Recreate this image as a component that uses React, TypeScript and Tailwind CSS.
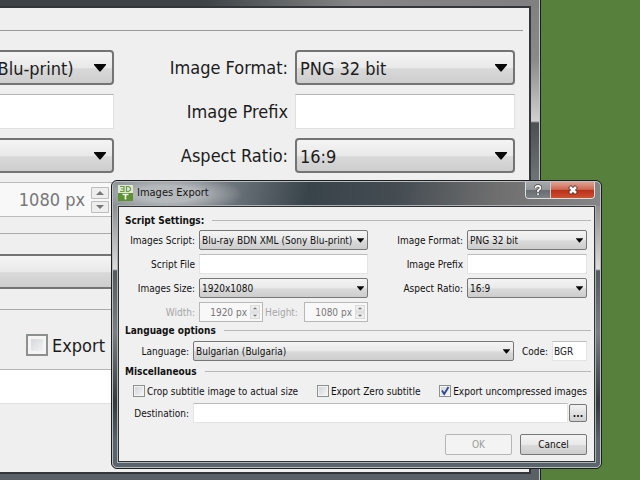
import type { ReactNode } from 'react';

function Arrow({ big }: { big?: boolean }) {
  return (
    <svg
      viewBox="0 0 12 8"
      aria-hidden="true"
      className={
        big
          ? 'pointer-events-none absolute right-2 top-[14px] h-[8px] w-[12px]'
          : 'pointer-events-none absolute right-1 top-2 h-[5px] w-[7px]'
      }
    >
      <path d="M0 0H12V1L6.500 7.500H5.500L0 1Z" fill="#080808" />
    </svg>
  );
}

function Combo({ id, value, big, label }: { id?: string; value: string; big?: boolean; label?: string }) {
  return (
    <div className="relative min-w-0 flex-1">
      <select
        id={id}
        aria-label={label}
        className={
          big
            ? 'block h-[35px] w-full appearance-none rounded-[4px] border-2 border-[#747474] bg-[linear-gradient(#f4f4f4,#e9e9e9_50%,#d9d9d9_54%,#cdcdcd)] pl-[3px] pt-[2px] text-[18px] text-[#1c1c1c]'
            : 'block h-5 w-full appearance-none rounded-[2px] border border-[#777] bg-[linear-gradient(#f4f4f4,#e9e9e9_50%,#dadada_54%,#cdcdcd)] pl-[2px] text-[10px] text-[#111]'
        }
      >
        <option>{value}</option>
      </select>
      <Arrow big={big} />
    </div>
  );
}

function Field({ id, big, label, value }: { id?: string; big?: boolean; label?: string; value?: string }) {
  return (
    <input
      id={id}
      aria-label={label}
      defaultValue={value}
      className={
        big
          ? 'block h-[35px] w-full min-w-0 border border-[#e0e0e0] border-t-[#b5b5b5] bg-white px-1 text-[18px]'
          : 'block h-5 w-full min-w-0 border border-[#e4e4e4] border-t-[#bcbcbc] bg-white px-px text-[10px] text-[#222]'
      }
    />
  );
}

function Spin({ id, value, big, label }: { id?: string; value: string; big?: boolean; label?: string }) {
  return (
    <div
      className={
        big
          ? 'flex h-[35px] items-center gap-[6px] border border-[#bbb] bg-[#f8f8f8] pr-1'
          : 'flex h-5 w-16 items-center gap-[3px] border border-[#b8b8b8] bg-[#f8f8f8] pr-[2px]'
      }
    >
      <input
        id={id}
        aria-label={label}
        disabled
        defaultValue={value}
        className={
          big
            ? 'w-0 min-w-0 flex-1 text-right text-[18px] text-[#777]'
            : 'w-0 min-w-0 flex-1 text-right text-[10px] text-[#777]'
        }
      />
      <svg
        viewBox="0 0 18 26"
        preserveAspectRatio="none"
        aria-hidden="true"
        className={big ? 'h-[26px] w-[18px]' : 'h-[14px] w-[10px]'}
      >
        <path d="M.5 .5H17.5V11.5H.5ZM.5 14.5H17.5V25.5H.5Z" fill="#eee" stroke="#bdbdbd" />
        <path d="M5 8L9 4L13 8ZM5 18L9 22L13 18Z" fill="#777" />
      </svg>
    </div>
  );
}

function Label({ htmlFor, children, muted, big }: { htmlFor: string; children: ReactNode; muted?: boolean; big?: boolean }) {
  return (
    <label
      htmlFor={htmlFor}
      className={
        muted
          ? 'whitespace-nowrap pr-1 text-right text-[#a5a5a5]'
          : big
            ? 'whitespace-nowrap pr-[7px] text-right'
            : 'whitespace-nowrap pr-1 text-right'
      }
    >
      {children}
    </label>
  );
}

function Section({ children }: { children: ReactNode }) {
  return (
    <div className="-mr-1 flex h-4 items-center gap-2">
      <h2 className="text-[10px] font-bold">{children}</h2>
      <div className="h-px flex-1 bg-[#b8b8b8]" />
    </div>
  );
}

function Check({ label, checked }: { label: string; checked?: boolean }) {
  return (
    <label className="flex items-center gap-[2px] whitespace-nowrap">
      <span className="relative block size-3">
        <input
          type="checkbox"
          defaultChecked={checked}
          className="peer block size-3 appearance-none border border-[#8e8f8f] bg-linear-to-br from-[#cfd2d6] to-[#f8f8f8] shadow-[inset_0_0_0_1px_#f4f4f4]"
        />
        <svg
          viewBox="0 0 12 12"
          aria-hidden="true"
          className="pointer-events-none absolute inset-0 hidden size-3 peer-checked:block"
        >
          <path d="M3 5.5L5.2 9L9.5 2" fill="none" stroke="#2c4a94" strokeWidth="1.8" />
        </svg>
      </span>
      {label}
    </label>
  );
}

function BackWindow() {
  return (
    <section
      aria-label="Export settings"
      className="absolute inset-y-0 -left-[202px] right-[99px] border-r border-[#1c1e1f] text-[18px] text-[#1c1c1c]"
    >
      <div className="flex h-full flex-col border-r border-[#c2c6c8] bg-[linear-gradient(90deg,#3d4347_0,#3d4347_55%,#858585_75%,#808080_100%),linear-gradient(#808080_0,#8a8a8a_60px,#d0d0d0_121px,#4c5053_123px,#6f7477_180px,#596068_100%)] bg-[length:100%_6px,100%_100%] bg-no-repeat pb-[6px] pr-[8px] pt-[6px]">
        <div className="flex-1 border-y-2 border-r-2 border-[#33373a] bg-[#efefef] pr-[6px]">
          <div className="mt-[22px] h-px bg-[#9a9a9a]" />
          <div className="mr-2 mt-[19px] grid grid-cols-[316px_1fr_220px] items-center gap-y-[9px]">
            <Combo big label="Images script" value="Blu-ray BDN XML (Sony Blu-print)" />
            <Label big htmlFor="b-format">Image Format:</Label>
            <Combo big id="b-format" value="PNG 32 bit" />
            <Field big label="Script file" />
            <Label big htmlFor="b-prefix">Image Prefix</Label>
            <Field big id="b-prefix" />
            <Combo big label="Images size" value="1920x1080" />
            <Label big htmlFor="b-ratio">Aspect Ratio:</Label>
            <Combo big id="b-ratio" value="16:9" />
            <Spin big label="Height" value="1080 px" />
          </div>
          <div className="mt-4 h-px bg-[#aaa]" />
          <div className="mt-5 flex">
            <Combo big label="Language" value="Bulgarian (Bulgaria)" />
          </div>
          <div className="mt-5 h-px bg-[#aaa]" />
          <label className="ml-[228px] mt-6 flex h-[22px] items-center gap-1">
            <input
              type="checkbox"
              className="size-[22px] appearance-none border-2 border-[#8e8f8f] bg-linear-to-br from-[#cfd2d6] to-[#f8f8f8] shadow-[inset_0_0_0_3px_#f4f4f4]"
            />
            Export
          </label>
          <div className="mt-[13px]">
            <Field big label="Destination" />
          </div>
        </div>
      </div>
    </section>
  );
}

function TitleBar() {
  return (
    <header className="flex h-6 items-start justify-between">
      <div className="flex items-center gap-1 pt-[3px]">
        <svg viewBox="0 0 15 16" className="h-4 w-[15px]" aria-hidden="true">
          <rect width="15" height="8" fill="#dfe8d5" />
          <rect y="8" width="15" height="8" fill="#5d9132" />
          <path d="M2 1.5H6V6.5H2M3 4H6M8.500 1.500V6.500H10.500L12.500 5V3L10.500 1.500Z" fill="none" stroke="#6c9a48" strokeWidth="1.200" />
          <path d="M4.500 9.500H10.500M7.500 9.500V14.500" stroke="#eef5e6" strokeWidth="1.700" />
        </svg>
        <h1 className="text-[11px] leading-4 text-[#151515]">Images Export</h1>
      </div>
      <div className="flex h-[17px] overflow-hidden rounded-b-[4px] border border-t-0 border-[#ddd]">
        <button
          type="button"
          aria-label="Help"
          className="flex w-[25px] items-center justify-center border-r border-[#ccc] bg-[linear-gradient(#a5a8aa,#94989b_48%,#686d71_52%,#7c8185)]"
        >
          <svg viewBox="0 0 10 12" className="h-3 w-[10px]" aria-hidden="true">
            <path d="M2.500 4Q2.500 1.800 5 1.800T7.500 4Q7.500 5.200 5 6.500V8M5 9.200V11" fill="none" stroke="#444" strokeWidth="3" />
            <path d="M2.500 4Q2.500 1.800 5 1.800T7.500 4Q7.500 5.200 5 6.500V8M5 9.200V11" fill="none" stroke="#fff" strokeWidth="1.700" />
          </svg>
        </button>
        <button
          type="button"
          aria-label="Close"
          className="flex w-[43px] items-center justify-center bg-[linear-gradient(#dba394,#cf6a55_46%,#b8301a_52%,#d0502f)]"
        >
          <svg viewBox="0 0 12 10" className="h-[10px] w-3" aria-hidden="true">
            <path d="M2.500 1.500L9.500 8.500M9.500 1.500L2.500 8.500" stroke="#5c2a24" strokeWidth="4.200" />
            <path d="M3 2L9 8M9 2L3 8" stroke="#fff" strokeWidth="2.600" />
          </svg>
        </button>
      </div>
    </header>
  );
}

function Dialog() {
  return (
    <section
      aria-label="Images Export"
      className="absolute left-[111px] right-[38px] top-[180px] rounded-[6px] border border-[#1d1d1d] bg-[#5a636a] text-[10px] text-[#111]"
    >
      <div className="rounded-[5px] border border-[#b9bec1] bg-[radial-gradient(ellipse_75px_20px_at_55px_12px,#b9bcbff0_40%,#b9bcbf00),linear-gradient(100deg,#858b8f_0,#6b737a_25%,#39434a_40%,#444c52_58%,#6e6e6e_78%,#858585_100%),linear-gradient(#8a8a8a_20px,#dcdcdc_87px,#54595d_89px,#7b7f82_150px,#33393d_220px,#59646c_260px)] bg-[length:100%_24px,100%_24px,100%_100%] bg-no-repeat px-[5px] pb-[5px]">
        <TitleBar />
        <div className="border border-[#333] bg-[#f0f0f0] pb-[6px] pl-[6px] pr-[7px] pt-[5px] shadow-[0_0_0_1px_#aab0b4]">
          <Section>Script Settings:</Section>
          <div className="mt-[2px] grid grid-cols-[74px_1fr_99px_120px] items-center gap-y-1">
            <Label htmlFor="script">Images Script:</Label>
            <Combo id="script" value="Blu-ray BDN XML (Sony Blu-print)" />
            <Label htmlFor="format">Image Format:</Label>
            <Combo id="format" value="PNG 32 bit" />
            <Label htmlFor="file">Script File</Label>
            <Field id="file" />
            <Label htmlFor="prefix">Image Prefix</Label>
            <Field id="prefix" />
            <Label htmlFor="size">Images Size:</Label>
            <Combo id="size" value="1920x1080" />
            <Label htmlFor="ratio">Aspect Ratio:</Label>
            <Combo id="ratio" value="16:9" />
            <Label htmlFor="width" muted>Width:</Label>
            <div className="flex items-center justify-between">
              <Spin id="width" value="1920 px" />
              <Label htmlFor="height" muted>Height:</Label>
              <Spin id="height" value="1080 px" />
            </div>
          </div>
          <Section>Language options</Section>
          <div className="mt-[3px] flex items-center">
            <div className="flex w-[68px] justify-end"><Label htmlFor="lang">Language:</Label></div>
            <Combo id="lang" value="Bulgarian (Bulgaria)" />
            <div className="ml-2 flex items-center"><Label htmlFor="code">Code:</Label></div>
            <div className="w-[35px]"><Field id="code" value="BGR" /></div>
          </div>
          <div className="mt-[2px]"><Section>Miscellaneous</Section></div>
          <div className="mt-1 flex h-4 items-center justify-between pl-2">
            <Check label="Crop subtitle image to actual size" />
            <Check label="Export Zero subtitle" />
            <Check label="Export uncompressed images" checked />
          </div>
          <div className="mt-1 flex items-center">
            <div className="flex w-[68px] justify-end"><Label htmlFor="dest">Destination:</Label></div>
            <div className="min-w-0 flex-1"><Field id="dest" /></div>
            <button
              type="button"
              aria-label="Browse"
              className="ml-px flex h-[18px] w-[18px] items-center justify-center rounded-[2px] border border-[#777] bg-linear-to-b from-[#f3f3f3] to-[#d0d0d0] font-bold"
            >
              ...
            </button>
          </div>
          <div className="mt-[11px] flex justify-end gap-2">
            <button type="button" disabled className="h-[21px] w-[67px] rounded-[2px] border border-[#b5b5b5] bg-[#f3f3f3] text-[#999]">
              OK
            </button>
            <button type="button" className="h-[21px] w-[67px] rounded-[2px] border border-[#777] bg-[linear-gradient(#f4f4f4,#e9e9e9_50%,#dadada_54%,#cdcdcd)]">
              Cancel
            </button>
          </div>
        </div>
      </div>
    </section>
  );
}

export default function App() {
  return (
    <main className="relative min-h-screen overflow-hidden bg-[#56803c] font-['DejaVu_Sans_Condensed','DejaVu_Sans',sans-serif]">
      <BackWindow />
      <Dialog />
    </main>
  );
}
